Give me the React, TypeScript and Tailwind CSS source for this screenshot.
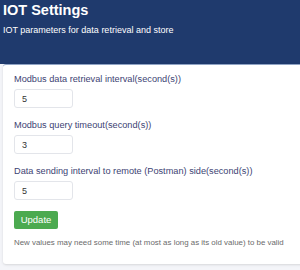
import React from 'react';

const fields = [
    { label: 'Modbus data retrieval interval(second(s))', value: '5' },
    { label: 'Modbus query timeout(second(s))', value: '3' },
    { label: 'Data sending interval to remote (Postman) side(second(s))', value: '5' },
];

export default function App() {
    return (
        <div
            className="w-[300px] h-[270px] overflow-hidden bg-[#f4f5f9]"
            style={{ fontFamily: '"Liberation Sans", Arial, sans-serif' }}
        >
            {/* Header */}
            <header className="h-[64px] bg-[#1f3a6d] px-[3px] pt-[1px] text-white">
                <h1 className="text-[14.5px] font-bold leading-[18px]">IOT Settings</h1>
                <p className="mt-[5px] text-[9px] leading-[12px]">IOT parameters for data retrieval and store</p>
            </header>

            {/* Settings card */}
            <div className="ml-[3px] w-[320px] rounded-l-[3px] border-t border-[#8fa3c4] bg-white pl-[11px] pt-[8px] pb-[16px] shadow-sm">
                {fields.map((f, i) => (
                    <div key={i} className={i > 0 ? 'mt-[11px]' : ''}>
                        <label className="block text-[9.2px] leading-[12px] text-[#3d4373]">{f.label}</label>
                        <input
                            defaultValue={f.value}
                            className="mt-[4px] block h-[19px] w-[59px] rounded-[3px] border border-[#e3e5ea] px-[7px] text-[9px] text-[#333] outline-none"
                        />
                    </div>
                ))}
                <button className="mt-[11px] block h-[18px] w-[44px] rounded-[2px] bg-[#4caa50] text-[9.5px] text-white">
                    Update
                </button>
                <p className="mt-[9px] text-[7.9px] leading-[10px] text-[#6b6b6b]">
                    New values may need some time (at most as long as its old value) to be valid
                </p>
            </div>
        </div>
    );
}
